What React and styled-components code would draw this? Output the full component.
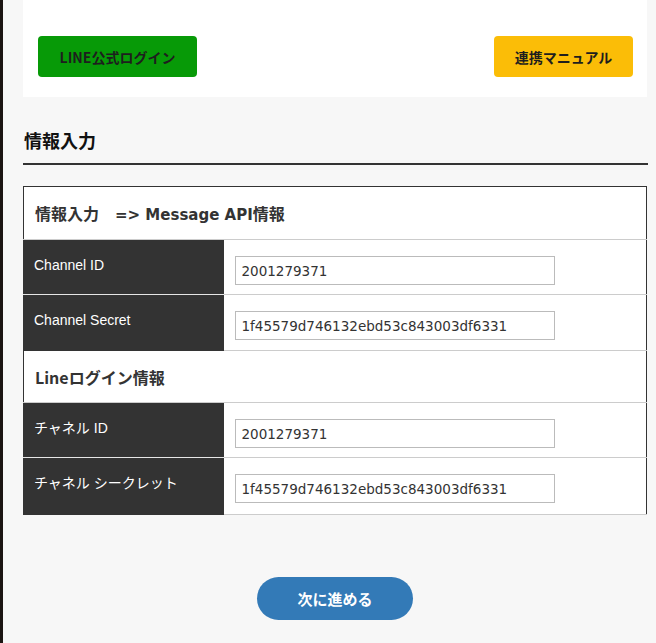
import styled, { createGlobalStyle } from 'styled-components';

const GlobalStyle = createGlobalStyle`
  html, body {
    margin: 0;
    padding: 0;
    background: #f7f7f7;
    font-family: "Noto Sans CJK JP", "Liberation Sans", sans-serif;
    color: #222;
  }
`;

const Page = styled.div`
  min-height: 643px;
  border-left: 3px solid #1b1512;
  box-sizing: border-box;
  padding: 0 9px 0 20px;
`;

const LinkCard = styled.div`
  background: #fff;
  display: flex;
  justify-content: space-between;
  align-items: center;
  padding: 36px 14px 20px 15px;
`;

const ActionButton = styled.button`
  height: 41px;
  width: ${p => p.width}px;
  border: none;
  border-radius: 4px;
  background: ${p => p.bg};
  color: #1e1e1e;
  font-family: "Noto Sans CJK JP", sans-serif;
  font-weight: 700;
  font-size: 14px;
  cursor: pointer;
`;

const SectionTitle = styled.h2`
  margin: 31px -1px 0 0;
  padding: 0 0 11px 1px;
  font-size: 18px;
  font-weight: 700;
  color: #111;
  line-height: 24px;
  border-bottom: 2px solid #333;
`;

const InfoTable = styled.table`
  margin-top: 21px;
  width: 100%;
  border-collapse: collapse;
  border: 1px solid #333;
  background: #fff;
`;

const GroupCell = styled.th`
  text-align: left;
  padding: 0 11px;
  height: ${p => p.h}px;
  font-family: "Noto Sans CJK JP", sans-serif;
  font-size: 16px;
  font-weight: 700;
  color: #333;
  border-bottom: 1px solid #ccc;
`;

const Latin = styled.span`
  font-family: "DejaVu Sans", sans-serif;
  font-size: 15px;
`;

const LabelCell = styled.th`
  width: 200px;
  background: #333;
  color: #fff;
  text-align: left;
  vertical-align: top;
  padding: 16px 10px 0;
  height: ${p => p.h}px;
  box-sizing: border-box;
  font-family: "Liberation Sans", "Noto Sans CJK JP", sans-serif;
  font-size: 14px;
  font-weight: 400;
  line-height: 18px;
  border-bottom: 1px solid ${p => (p.last ? '#333' : '#e6e6e6')};
`;

const ValueCell = styled.td`
  vertical-align: top;
  padding: 16px 11px 0;
  border-bottom: 1px solid #ccc;
`;

const TextInput = styled.input`
  display: block;
  width: 320px;
  height: 29px;
  box-sizing: border-box;
  border: 1px solid #bbb;
  padding: 0 6px;
  font-family: "DejaVu Sans", sans-serif;
  font-size: 13.5px;
  color: #333;
  background: #fff;
`;

const Footer = styled.div`
  display: flex;
  justify-content: center;
  padding-top: 62px;
`;

const NextButton = styled.button`
  width: 156px;
  height: 43px;
  border: none;
  border-radius: 22px;
  background: #337ab7;
  color: #fff;
  font-family: "Noto Sans CJK JP", sans-serif;
  font-weight: 700;
  font-size: 15px;
  cursor: pointer;
`;

const groups = [
  {
    title: (
      <>
        情報入力　<Latin>=&gt; Message API</Latin>情報
      </>
    ),
    h: 52,
    rows: [
      { label: 'Channel ID', value: '2001279371', h: 55 },
      { label: 'Channel Secret', value: '1f45579d746132ebd53c843003df6331', h: 56 },
    ],
  },
  {
    title: 'Lineログイン情報',
    h: 51,
    rows: [
      { label: 'チャネル ID', value: '2001279371', h: 55 },
      { label: 'チャネル シークレット', value: '1f45579d746132ebd53c843003df6331', h: 57 },
    ],
  },
];

export default function App() {
  return (
    <Page>
      <GlobalStyle />
      <LinkCard>
        <ActionButton width={159} bg="#079a07">LINE公式ログイン</ActionButton>
        <ActionButton width={139} bg="#fbbd07">連携マニュアル</ActionButton>
      </LinkCard>

      <SectionTitle>情報入力</SectionTitle>

      <InfoTable>
        <tbody>
          {groups.map((g, gi) => [
            <tr key={`g${gi}`}>
              <GroupCell colSpan={2} h={g.h}>{g.title}</GroupCell>
            </tr>,
            ...g.rows.map((r, ri) => (
              <tr key={`r${gi}-${ri}`}>
                <LabelCell h={r.h} last={ri === g.rows.length - 1}>{r.label}</LabelCell>
                <ValueCell>
                  <TextInput defaultValue={r.value} />
                </ValueCell>
              </tr>
            )),
          ])}
        </tbody>
      </InfoTable>

      <Footer>
        <NextButton>次に進める</NextButton>
      </Footer>
    </Page>
  );
}
